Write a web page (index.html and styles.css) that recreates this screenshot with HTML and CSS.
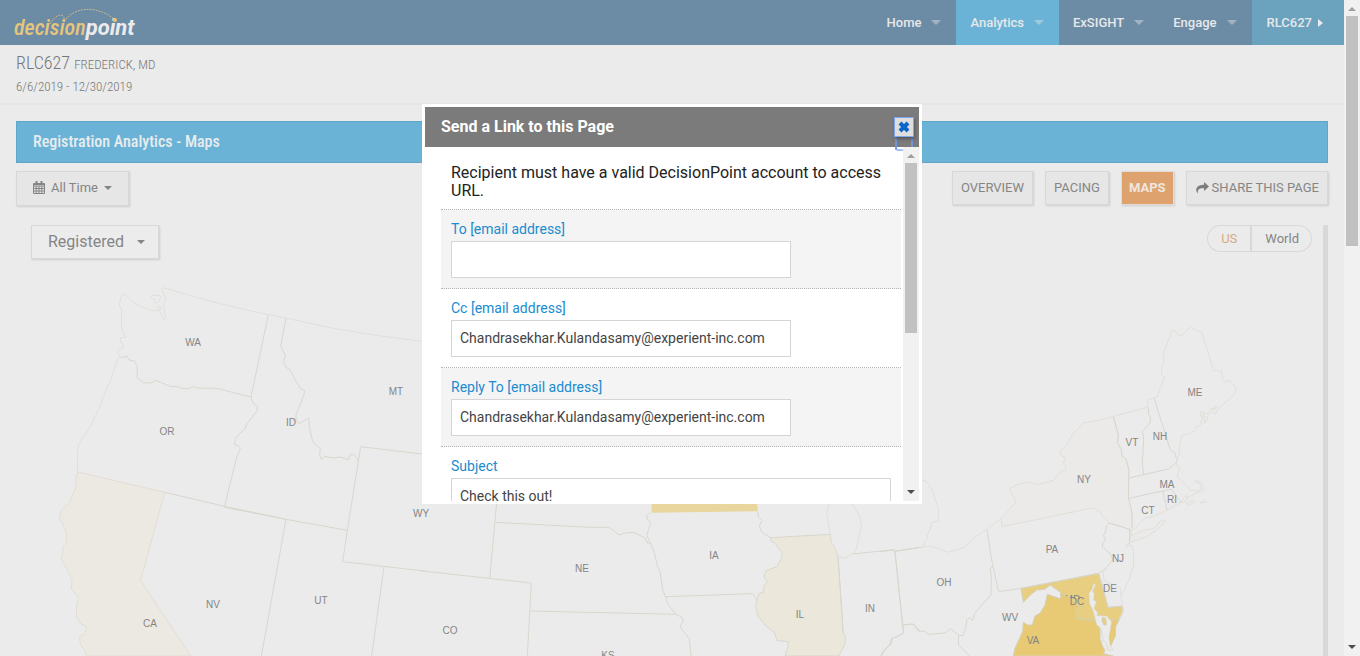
FILE: index.html
```html
<!DOCTYPE html>
<html lang="en">
<head>
<meta charset="utf-8">
<title>DecisionPoint - Registration Analytics</title>
<link rel="stylesheet" href="styles.css">
</head>
<body>
<div class="window">
  <div class="page">
    <header class="topbar">
      <a class="logo" href="#" aria-label="decisionpoint">
        <svg width="126" height="34" viewBox="12 6 126 34">
          <path class="logo-arc" d="M50 24C54 17 60 13 63 16C65 18 64 20 64 22M64 22C74 5 100 6 115 20"/>
          <text class="logo-text" x="14" y="35"><tspan class="logo-a">decision</tspan><tspan class="logo-b">point</tspan></text>
          <circle class="logo-dot" cx="115" cy="20" r="2"/>
        </svg>
      </a>
      <nav class="nav">
        <a class="nav-item" href="#">Home<span class="caret"></span></a>
        <a class="nav-item nav-active" href="#">Analytics<span class="caret"></span></a>
        <a class="nav-item" href="#">ExSIGHT<span class="caret"></span></a>
        <a class="nav-item" href="#">Engage<span class="caret"></span></a>
        <a class="nav-item nav-event" href="#">RLC627<span class="caret-right"></span></a>
      </nav>
    </header>

    <section class="event">
      <h1 class="event-name">RLC627 <small class="event-place">FREDERICK, MD</small></h1>
      <p class="event-dates">6/6/2019 - 12/30/2019</p>
    </section>

    <main class="content">
      <h2 class="title">Registration Analytics - Maps</h2>
      <div class="toolbar">
        <button class="btn btn-time" type="button">
          <svg width="12" height="13" viewBox="0 0 12 13" class="line-icon"><path d="M.5 2.5h11v10h-11zM.5 5h11M.5 7.500h11M.5 10h11M3.200 5v7.500M6 5v7.500M8.800 5v7.500M.5 3.500h11"/><path d="M3.500 0v3M8.500 0v3" stroke-width="2"/></svg>
          All Time<span class="caret-small"></span>
        </button>
        <div class="views">
          <button class="btn" type="button">OVERVIEW</button>
          <button class="btn" type="button">PACING</button>
          <button class="btn btn-on" type="button">MAPS</button>
          <button class="btn" type="button"><svg width="14" height="12" viewBox="0 0 14 12" class="fill-icon"><path d="M9 0L14 4.500L9 9V6.300C5 6 2.500 6.800 2.800 11.500C0 8 .5 3 9 2.700Z"/></svg>SHARE THIS PAGE</button>
        </div>
      </div>

      <div class="map-area">
        <div class="map">
          <svg class="map-svg" viewBox="16 225 1307 431" preserveAspectRatio="xMinYMin meet">
            <g transform="translate(0 270) scale(.33333)">
              <path class="tan-light" d="M233 606L494 667 422 931 573 1158H260L252 1138 241 1125 239 1100 255 1090 260 1075 255 1066 243 1062 229 1040 230 1005 236 983 214 958 216 932 205 905 184 867 191 827 199 818 199 790 190 765 178 745 185 720 208 697 228 652 227 625Z"/>
              <path class="coast" d="M805 134L740 120 640 96 570 76 490 53 485 60 499 88 490 103 494 122 496 147 490 148 484 133 478 125 481 112 474 110 471 122 455 121 425 111 400 97 380 79 369 71 362 85 358 105 365 120 364 165 370 192 379 201 362 203 361 216 371 222 366 237 355 241 352 250 362 263"/>
              <path class="coast" d="M456 75L468 77 478 74 482 83 475 94 469 101 464 94 461 87 454 83ZM462 91L470 87M362 263L352 268 330 335 318 360 296 418 270 472 235 525 232 565 233 606M478 125L485 108"/>
              <path class="coast" d="M805 134L857 144 1000 175 1120 195 1290 217"/>
              <path class="edge" d="M362 263L381 259 387 270 403 273 412 290 411 322 430 338 457 339 464 331 485 338 512 350 530 349 540 354 560 357 582 350 588 354 650 355 753 381 805 134M753 381L758 398 773 409 771 423 755 443 742 460 734 478 719 490 706 506 704 525 715 526 721 534 710 562 674 709M858 144L842 228 856 257 850 275 858 292 870 299 890 338 903 357 914 362 912 374 888 435 888 450 897 461 927 444 928 470 938 515 961 536 959 555 966 569 974 559 1000 564 1020 561 1046 569 1050 555 1060 552 1070 563 1074 572M1290 555L1082 530 1042 781 1028 875 1290 905M494 667L674 709 858 748 1042 781M674 712L858 748M858 748L784 1158M1152 890L1115 1158"/>
            </g>
            <g transform="translate(420 490) scale(.33333)">
              <path class="gold-mid" d="M694 0H1010L1013 64 695 68Z"/>
              <path class="tan" d="M1052 143L1231 133 1233 155 1245 175 1254 198 1266 370 1269 425 1276 440 1275 462 1257 498H1095L1105 467 1103 455 1070 451 1065 430 1035 405 1015 380 1007 350 1012 325 1018 310 1030 307 1031 290 1042 275 1032 260 1038 242 1070 230 1085 205 1086 188 1065 160 1053 152Z"/>
              <path class="edge" d="M230 40L209 267M-2 242L334 279 322 498M226 97L510 112 567 112 598 135 613 129 642 127 675 144 683 160 692 160 704 190 712 228 720 245 728 300 740 328 742 340 766 372 786 382 790 393 781 408 785 418 808 446 813 498M331 363L766 373M690 68L680 78 683 90 692 98 680 137 692 160M737 320L998 311 1012 331M1013 64L1016 82 1026 92 1018 108 1025 126 1052 143M1254 198L1269 425M1297 192L1424 179 1448 405 1451 428 1436 438 1418 444 1413 463 1395 480 1384 498M1424 184L1500 172M1448 405L1477 402 1490 412 1500 424"/>
              <path class="coast" d="M1228 42L1220 70 1231 133 1233 155 1245 175 1254 198 1273 206 1297 191 1308 180 1325 108 1318 75 1296 42"/>
            </g>
            <g transform="translate(880 300) scale(.33333)">
              <path class="tan-faint" d="M700 349L715 405 713 430 725 450 725 468 738 476 747 510 745 590 756 640 755 680 751 695 757 706 790 690 822 685 845 659 858 664 830 690 800 711 749 727 749 688 688 669 667 648 660 635 638 624 366 680 364 655 408 606 400 590 387 568 410 554 440 547 477 553 520 541 543 514 557 510 557 495 550 490 556 473 542 466 540 455 560 434 582 397 610 369 655 361Z"/>
              <path class="gold-md" d="M423 865L656 820 670 866 684 922 728 918 729 935 718 958 693 963 672 950 652 947 646 962 588 955 586 937 597 918 542 877 510 855 494 868 470 870 452 884 430 907Z"/>
              <text class="st big" x="577" y="909">MD</text>
              <path class="gold-cover" d="M550 896L604 897 610 914 597 918Z"/>
              <path class="gold-va" d="M502 883L542 897 542 877 560 890 572 896 597 918 586 937 588 955 646 962 655 975 660 990 660 1015 668 1040 675 1050 670 1061 699 1068H400L405 1045 428 995 430 967 443 975 457 975 465 948 480 940 495 915Z"/>
              <path class="gold-va" d="M693 963L718 958 707 980 706 1008 691 1040 685 1015Z"/>
              <path class="water" d="M648 850L640 853 635 870 627 878 628 910 640 935 650 975 662 985 670 1022 680 1030 684 1050 700 1050 691 1038 687 1012 695 965 680 948 652 947 653 938 642 925 650 905 641 900 643 880 638 875Z"/>
              <path class="gold-md" d="M668 952L666 962 672 975 679 974 677 955Z"/>
              <path class="edge" d="M700 349L715 405 713 430 725 450 725 468 738 476 747 510 745 590 756 640 757 684M805 322L806 343 811 350 811 367 788 394 791 420 787 490 791 525M822 294L871 450 885 458 888 472 893 474 888 489 865 507 748 534M746 595L848 573 861 631M848 573L875 568 903 607M68 975L71 998 50 1010 35 1015 28 1035 8 1055 2 1068M0 755L42 750M45 754L128 741M45 754L68 975M321 688L334 775 356 875 423 865 656 820 677 807 698 779 690 760 668 742 667 730 677 721 670 707 677 695 680 677 688 669M68 975L100 972 115 993 135 994 146 1003 195 999 212 986 236 1006 249 1007 257 985 260 962 268 953 278 962 284 940 310 910 333 884 334 830 331 805 340 799M236 1006L235 1033 268 1068M688 669L749 688 749 727 738 740M656 820L684 922 728 918"/>
              <path class="coast" d="M700 349L803 322 803 299 822 294 833 290 838 270 854 234 845 223 845 203 850 190 852 155 875 95 885 91 895 106 905 106 932 82 965 97 1001 211 1025 213 1028 238 1038 248 1042 240 1052 244 1069 267 1060 287 1015 325 1006 343 998 337 1001 323 1011 318 1005 327 992 325 986 345 975 337 970 348 984 352 975 370 972 355 961 348 963 333 970 335 967 355 962 375 948 383 945 392 925 403 907 404 901 425 896 470M888 489L898 507 891 533 904 540 930 570 952 573 965 567 960 551 944 543 960 544 971 558 970 573 950 578 926 592 911 607 903 607 916 588 925 588 914 607M918 610L940 600 945 606 928 614ZM960 609L975 599 979 607ZM903 607L861 631 822 649 795 654 765 685 751 695 757 706M126 539L140 545 157 573 175 625 175 662 155 668 150 690 141 705 142 716 127 741 150 738 180 747 205 757 255 741 285 712 321 688 364 655M738 740L755 735 760 755 761 795 747 840 735 865 728 880 721 880 722 865 700 855 672 842 670 817 677 807M721 880L728 918 729 935 718 958"/>
            </g>
            <g class="st">
              <text x="193" y="346">WA</text><text x="167" y="435">OR</text><text x="291" y="426">ID</text><text x="396" y="395">MT</text><text x="421" y="517">WY</text><text x="150" y="627">CA</text><text x="213" y="608">NV</text><text x="321" y="604">UT</text><text x="450" y="634">CO</text><text x="582" y="572">NE</text><text x="608" y="659">KS</text><text x="714" y="559">IA</text><text x="800" y="618">IL</text><text x="870" y="612">IN</text><text x="944" y="586">OH</text><text x="1010" y="621">WV</text><text x="1033" y="644">VA</text><text x="1052" y="553">PA</text><text x="1118" y="562">NJ</text><text x="1110" y="592">DE</text><text x="1077" y="605">DC</text><text x="1084" y="483">NY</text><text x="1132" y="446">VT</text><text x="1160" y="440">NH</text><text x="1195" y="396">ME</text><text x="1167" y="488">MA</text><text x="1172" y="503">RI</text><text x="1148" y="514">CT</text>
            </g>
          </svg>
          <div class="map-tools">
            <button class="btn btn-reg" type="button">Registered<span class="caret-small"></span></button>
            <div class="scope">
              <button class="scope-btn scope-on" type="button">US</button>
              <button class="scope-btn" type="button">World</button>
            </div>
          </div>
        </div>
        <div class="divider"></div>
      </div>
    </main>
  </div>

  <div class="scroll" aria-hidden="true"><span class="up"></span><span class="thumb thumb-page"></span><span class="down"></span></div>

  <div class="layer">
    <section class="dialog" role="dialog" aria-labelledby="dlg-title">
      <div class="dialog-head">
        <h3 class="dialog-title" id="dlg-title">Send a Link to this Page</h3>
        <span class="ring"></span>
        <button class="close" type="button" aria-label="Close"><svg width="12" height="12" viewBox="0 0 12 12"><path d="M2 2L10 10M10 2L2 10"/></svg></button>
      </div>
      <div class="dialog-main">
        <form class="form">
          <p class="intro">Recipient must have a valid DecisionPoint account to access URL.</p>
          <div class="row row-alt"><label class="label" for="to">To [email address]</label><input class="field" id="to" type="text"></div>
          <div class="row"><label class="label" for="cc">Cc [email address]</label><input class="field" id="cc" type="text" value="Chandrasekhar.Kulandasamy@experient-inc.com"></div>
          <div class="row row-alt"><label class="label" for="reply">Reply To [email address]</label><input class="field" id="reply" type="text" value="Chandrasekhar.Kulandasamy@experient-inc.com"></div>
          <div class="row"><label class="label" for="subject">Subject</label><input class="field field-wide" id="subject" type="text" value="Check this out!"></div>
        </form>
        <div class="scroll" aria-hidden="true"><span class="up"></span><span class="thumb thumb-dialog"></span><span class="down"></span></div>
      </div>
    </section>
  </div>
</div>
</body>
</html>
```
FILE: styles.css
```css
* { box-sizing: border-box; }
body {
  margin: 0;
  background: #ebebeb;
  color: #858585;
  font: 13px/18px Roboto, "Liberation Sans", sans-serif;
  overflow: hidden;
}
h1, h2, h3, p { margin: 0; font-weight: 400; }
button, input { font: inherit; color: inherit; margin: 0; }
button { cursor: pointer; }
a { text-decoration: none; color: inherit; }

.window { display: flex; height: 100vh; }
.page { flex: 1; min-width: 0; display: flex; flex-direction: column; }

/* Top bar */
.topbar { display: flex; justify-content: space-between; height: 45px; background: #6c8ba5; }
.logo { padding: 6px 12px 0; }
.logo-text { font-style: italic; font-size: 22px; }
.logo-a { fill: #e6c67c; font-family: "Roboto Condensed", "Liberation Sans Narrow", sans-serif; font-weight: 500; }
.logo-b { fill: #ebebeb; font-family: Roboto, sans-serif; font-weight: 700; }
.logo-arc { fill: none; stroke: #c9bc8f; stroke-width: 1; stroke-dasharray: 2 1; }
.logo-dot { fill: #ecc466; }
.nav { display: flex; color: #e6e8ea; font-weight: 500; }
.nav-item { display: flex; align-items: center; gap: 10px; padding: 0 15px 0 14px; }
.nav-active { background: #6bb3d6; }
.nav-event { background: #6ba2be; gap: 6px; padding: 0 21px 0 15px; }
.caret { border: 5px solid transparent; border-top-color: #a3b3c1; border-bottom: 0; }
.nav-active .caret { border-top-color: #a0c9dc; }
.caret-right { border: 4px solid transparent; border-left: 5px solid #ebebeb; border-right: 0; }
.caret-small { border: 4px solid transparent; border-top-color: #858585; border-bottom: 0; }

/* Event summary */
.event {
  padding: 7px 16px;
  height: 60px;
  border-bottom: 2px solid #e5e5e5;
  font-family: "Roboto Condensed", "Liberation Sans Narrow", Roboto, sans-serif;
}
.event-name { font-size: 18px; line-height: 22px; font-weight: 300; color: #777777; }
.event-place { font-size: 13px; }
.event-dates { line-height: 22px; font-weight: 300; color: #777777; }

/* Page content */
.content { flex: 1; min-height: 0; display: flex; flex-direction: column; padding: 16px 16px 0; }
.title {
  padding: 0 16px;
  border: 1px solid #62a6c6;
  background: #6bb3d6;
  color: #e8ecee;
  font: 500 16px/40px "Roboto Condensed", "Liberation Sans Narrow", Roboto, sans-serif;
}
.toolbar { display: flex; justify-content: space-between; padding: 8px 0 19px; }
.views { display: flex; gap: 12px; }
.btn {
  display: flex;
  align-items: center;
  height: 34px;
  padding: 0 8px;
  border: 1px solid #d8d8d8;
  background: #e6e6e6;
  box-shadow: 1px 1px 2px #cccccc;
}
.btn-time { height: 35px; padding: 0 16px 2px; gap: 6px; }
.btn-on { background: #dea26f; border-color: #e4dcd4; color: #efe6de; font-weight: 700; padding: 0 7px; }
.btn-reg { padding: 0 13px 0 16px; gap: 13px; font-size: 16px; background: #ececec; }
.line-icon { fill: none; stroke: #858585; stroke-width: 1; }
.fill-icon { fill: #7d7d7d; margin-right: 3px; }

/* Map */
.map-area { flex: 1; min-height: 0; display: flex; }
.map { flex: 1; position: relative; overflow: hidden; }
.map-svg { position: absolute; inset: 0; width: 100%; }
.map-tools { position: relative; display: flex; justify-content: space-between; align-items: flex-start; padding: 0 11px 0 15px; }
.divider { width: 5px; background: #d8d8d8; }
.scope { display: flex; }
.scope-btn { height: 27px; padding: 0 13px; border: 1px solid #d8d8d8; background: none; }
.scope-btn:first-child { border-radius: 14px 0 0 14px; border-right: 0; }
.scope-btn:last-child { border-radius: 0 14px 14px 0; border-left-width: 2px; padding-right: 12px; }
.scope-on { color: #d4ab86; }
.edge { fill: none; stroke: #d8d7ce; stroke-width: 3; }
.coast { fill: none; stroke: #e0dfd9; stroke-width: 3; }
.tan-light { fill: #ece9e2; stroke: #e0ded4; stroke-width: 3; }
.tan-faint { fill: #ebeae8; stroke: #e0ded8; stroke-width: 3; }
.tan { fill: #ebe7da; stroke: #d8d7ce; stroke-width: 3; }
.gold-mid { fill: #e8d69e; }
.gold-md { fill: #e7ce80; stroke: #d5cfb4; stroke-width: 3; }
.gold-cover { fill: #e7ce80; }
.gold-va { fill: #e7ca73; stroke: #d5cfb4; stroke-width: 3; }
.water { fill: #ebebeb; stroke: #d5d3c4; stroke-width: 2; }
.st { font: 10px "Liberation Sans", sans-serif; fill: #858585; text-anchor: middle; }
.big { font-size: 30px; }

/* Scroll bars */
.scroll { display: flex; flex-direction: column; align-items: center; flex: none; width: 16px; background: #f1f1f1; }
.up { margin: 7px 0 5px; border: 4px solid transparent; border-bottom-color: #a0a0a0; border-top: 0; }
.down { margin: auto 0 7px; border: 4px solid transparent; border-top-color: #4d4d4d; border-bottom: 0; }
.thumb { width: 12px; background: #c1c1c1; }
.thumb-page { height: 35%; }
.thumb-dialog { height: 48%; }

/* Dialog */
.layer { position: fixed; inset: 0 16px 0 0; display: flex; justify-content: center; align-items: flex-start; padding-top: 104px; }
.dialog { display: flex; flex-direction: column; width: 500px; height: 400px; border: 3px solid #ffffff; background: #ffffff; }
.dialog-head { position: relative; display: flex; align-items: center; justify-content: space-between; height: 40px; padding: 0 5px 0 16px; background: #7b7b7b; }
.dialog-title { color: #ffffff; font-size: 16px; font-weight: 700; }
.close {
  position: relative;
  display: flex;
  align-items: center;
  justify-content: center;
  width: 20px;
  height: 20px;
  padding: 0;
  border: 1px solid #7da7f0;
  background: #dedede;
  box-shadow: 1px 2px 3px #555555;
}
.close svg { flex: none; fill: none; stroke: #0a66c8; stroke-width: 4; }
.ring { position: absolute; right: 6px; top: 28px; width: 18px; height: 16px; border: 2px solid #6f97dc; border-top: 0; border-bottom-color: #a4c4f8; border-radius: 0 0 3px 3px; }
.dialog-main { flex: 1; min-height: 0; display: flex; }
.dialog-main .scroll { position: relative; }
.form { flex: 1; overflow: hidden; padding: 0 2px 0 16px; color: #222222; font-size: 14px; }
.intro { padding: 17px 10px 9px; border-bottom: 1px dotted #b5b5b5; font-size: 16px; }
.row { padding: 10px; border-bottom: 1px dotted #b5b5b5; }
.row-alt { background: #f4f4f4; }
.label { display: block; margin-bottom: 3px; color: #1a8ccf; }
.field { display: block; width: 340px; height: 37px; padding: 0 8px 2px; border: 1px solid #d5d5d5; background: #ffffff; color: #444444; }
.field-wide { width: 100%; }
```
